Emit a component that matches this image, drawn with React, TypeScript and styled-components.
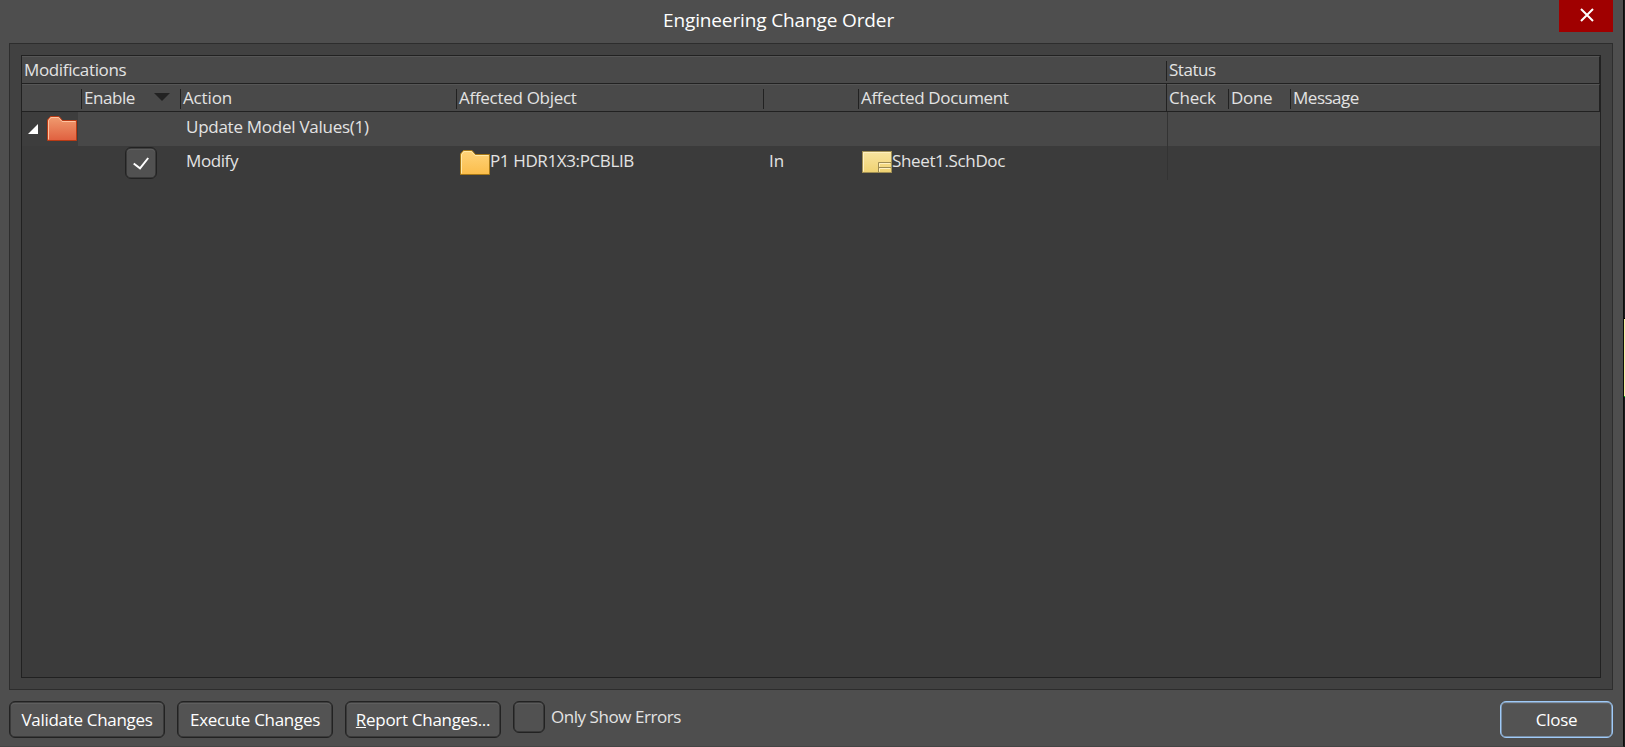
import React from 'react';
import styled, { createGlobalStyle } from 'styled-components';

const Global = createGlobalStyle`
  * { box-sizing: border-box; }
  html, body { margin: 0; overflow: hidden; background: #4e4e4e; }
`;

const Screen = styled.div`
  display: flex;
  width: 1625px;
  height: 747px;
  background: #1c1c1c;
`;

const Backdrop = styled.div`
  width: 1px;
  height: 79px;
  margin-top: 318px;
  background: #fbf3a0;
  border-top: 1px solid #000;
  border-bottom: 1px solid #00d000;
`;

const Window = styled.div`
  width: 1624px;
  height: 747px;
  display: flex;
  flex-direction: column;
  background: #4e4e4e;
  border-right: 1px solid #0c0c0c;
  border-bottom: 1px solid #444;
  font-family: 'Open Sans', 'Noto Sans', sans-serif;
  font-size: 17px;
  color: #e3e3e3;
  cursor: default;
`;

const TitleBar = styled.header`
  flex: none;
  height: 43px;
  display: flex;
  padding-right: 10px;
`;

const Title = styled.h1`
  flex: 1;
  margin: 0;
  padding-left: 663px;
  font-size: 19px;
  line-height: 40px;
  font-weight: 400;
  color: #fff;
  letter-spacing: -0.13px;
  white-space: nowrap;
`;

const WindowClose = styled.button`
  width: 54px;
  height: 32px;
  padding: 8px 0 0 1px;
  border: 0;
  background: #a00000;
  display: flex;
  justify-content: center;
`;

const Panel = styled.main`
  flex: none;
  width: 1604px;
  height: 647px;
  margin-left: 9px;
  padding: 11px;
  background: #414141;
  border: 1px solid #2d2d2d;
`;

const Grid = styled.div`
  width: 1580px;
  height: 623px;
  background: #3b3b3b;
  border: 1px solid #212121;
`;

const HeaderRow = styled.div`
  display: flex;
  align-items: flex-start;
  height: 28px;
  padding-top: 4px;
  background: #494949;
  border-top: 1px solid #565656;
  border-right: 1px solid #212121;
  border-bottom: 1px solid #212121;
`;

const HeaderCell = styled.div<{ $w?: number; $line?: boolean; $full?: boolean }>`
  flex: ${p => (p.$w ? 'none' : '1')};
  width: ${p => (p.$w ? p.$w + 'px' : 'auto')};
  height: ${p => (p.$full ? 27 : 20)}px;
  margin-top: ${p => (p.$full ? -5 : 0)}px;
  padding: ${p => (p.$full ? 5 : 0)}px 0 0 2px;
  border-left: ${p => (p.$line ? '1px solid #212121' : '0')};
  display: flex;
  justify-content: space-between;
  line-height: 18px;
  white-space: nowrap;
`;

const Row = styled.div<{ $h: number; $bg: string }>`
  display: flex;
  height: ${p => p.$h}px;
  background: ${p => p.$bg};
`;

const Cell = styled.div<{ $w?: number; $pad?: number; $top?: number; $bg?: string; $line?: string }>`
  flex: ${p => (p.$w ? 'none' : '1')};
  width: ${p => (p.$w ? p.$w + 'px' : 'auto')};
  padding: ${p => p.$top || 0}px 0 0 ${p => p.$pad || 0}px;
  background: ${p => p.$bg || 'transparent'};
  border-left: ${p => (p.$line ? `1px solid ${p.$line}` : '0')};
  display: flex;
  align-items: flex-start;
  line-height: 24px;
  white-space: nowrap;
`;

const Text = styled.span<{ $ls?: number }>`
  letter-spacing: ${p => p.$ls ?? -0.33}px;
`;

const IconBox = styled.span<{ $top?: number; $left?: number }>`
  display: flex;
  flex: none;
  margin: ${p => p.$top || 0}px 0 0 ${p => p.$left || 0}px;
`;

const Check = styled.span`
  flex: none;
  width: 32px;
  height: 32px;
  display: flex;
  align-items: center;
  justify-content: center;
  background: #515151;
  border: 1px solid #222;
  border-radius: 6px;
  box-shadow: inset 0 0 0 .5px #222, inset 0 2px 0 #5c5c5c;
`;

const Footer = styled.footer`
  display: flex;
  align-items: flex-start;
  padding: 11px 10px 0 9px;
`;

const Button = styled.button<{ $w?: number; $focus?: boolean }>`
  width: ${p => p.$w || 156}px;
  height: 37px;
  margin: 0 ${p => (p.$focus ? 0 : 12)}px 0 0;
  padding: 0;
  background: #535353;
  border: ${p => (p.$focus ? '1px solid #9fcaf8' : '1px solid #222')};
  border-radius: 6px;
  box-shadow: inset 0 0 0 ${p => (p.$focus ? '.5px #9fcaf8' : '.5px #222')}, inset 0 2px 0 #5e5e5e;
  font: inherit;
  color: #fff;
  letter-spacing: -0.3px;
  white-space: nowrap;
`;

const FooterLabel = styled.label`
  flex: 1;
  padding-left: 6px;
  line-height: 32px;
`;

const Folder = ({ id, top, bottom, stroke, hi }: { id: string; top: string; bottom: string; stroke: string; hi: string }) => (
  <svg width="30" height="25" viewBox="0 0 30 25">
    <defs>
      <linearGradient id={id} x1="0" y1="0" x2="0" y2="1">
        <stop offset="0" stopColor={top} />
        <stop offset="1" stopColor={bottom} />
      </linearGradient>
    </defs>
    <path d="M.5 24.5V4L3.500.5H12L15.500 4.500H29.500V24.500Z" fill={`url(#${id})`} stroke={stroke} />
    <path d="M1.500 23.500V4.500L4 1.500H11.500L15 5.500H28.500" fill="none" stroke={hi} />
  </svg>
);

const SheetIcon = () => (
  <svg width="30" height="22" viewBox="0 0 30 22">
    <defs>
      <linearGradient id="sheet" x1="0" y1="0" x2="0" y2="1">
        <stop offset="0" stopColor="#f8e4a0" />
        <stop offset="1" stopColor="#efd272" />
      </linearGradient>
    </defs>
    <rect x=".5" y=".5" width="29" height="21" fill="url(#sheet)" stroke="#a08f55" />
    <path d="M1.500 20.500V1.500H28.500" fill="none" stroke="#fff0c0" />
    <path d="M16.500 21V11.500H29M17 16.500H29" fill="none" stroke="#9c8b53" />
    <path d="M17.500 15.500V12.500H28M17.500 20.500V17.500H28" fill="none" stroke="#fff0c0" />
  </svg>
);

export default function App() {
  return (
    <Screen>
      <Global />
      <Window>
        <TitleBar>
          <Title>Engineering Change Order</Title>
          <WindowClose aria-label="Close window">
            <svg width="14" height="14" viewBox="0 0 14 14">
              <path d="M1 1L13 13M13 1L1 13" stroke="#fff" strokeWidth="2" />
            </svg>
          </WindowClose>
        </TitleBar>
        <Panel>
          <Grid>
            <HeaderRow>
              <HeaderCell $w={1144}><Text $ls={-0.36}>Modifications</Text></HeaderCell>
              <HeaderCell $line><Text $ls={-0.45}>Status</Text></HeaderCell>
            </HeaderRow>
            <HeaderRow>
              <HeaderCell $w={59} />
              <HeaderCell $w={99} $line>
                <Text $ls={-0.45}>Enable</Text>
                <IconBox $top={4}>
                  <svg width="26" height="8" viewBox="0 0 26 8"><path d="M0 0H16L8 8Z" fill="#222" /></svg>
                </IconBox>
              </HeaderCell>
              <HeaderCell $w={276} $line><Text $ls={-0.15}>Action</Text></HeaderCell>
              <HeaderCell $w={307} $line><Text $ls={-0.29}>Affected Object</Text></HeaderCell>
              <HeaderCell $w={95} $line />
              <HeaderCell $w={308} $line><Text>Affected Document</Text></HeaderCell>
              <HeaderCell $w={62} $line $full><Text $ls={-0.2}>Check</Text></HeaderCell>
              <HeaderCell $w={62} $line><Text $ls={-0.3}>Done</Text></HeaderCell>
              <HeaderCell $line><Text $ls={-0.48}>Message</Text></HeaderCell>
            </HeaderRow>
            <Row $h={34} $bg="#484848">
              <Cell $w={56} $bg="#3d3d3d" $pad={6} $top={4}>
                <IconBox $top={8}>
                  <svg width="10" height="10" viewBox="0 0 10 10"><path d="M10 0V10H0Z" fill="#fff" /></svg>
                </IconBox>
                <IconBox $left={9}>
                  <Folder id="red" top="#f09c70" bottom="#e0603f" stroke="#b83a14" hi="#ffc3a0" />
                </IconBox>
              </Cell>
              <Cell $w={108} />
              <Cell $w={981} $top={3}><Text $ls={-0.26}>Update Model Values(1)</Text></Cell>
              <Cell $line="#333" />
            </Row>
            <Row $h={34} $bg="#3b3b3b">
              <Cell $w={164} $pad={103} $top={1}>
                <Check>
                  <svg width="16" height="13" viewBox="0 0 16 13"><path d="M.7 6.500L7 11.300L15.200 1" fill="none" stroke="#fff" strokeWidth="2" /></svg>
                </Check>
              </Cell>
              <Cell $w={274} $top={3}><Text $ls={-0.4}>Modify</Text></Cell>
              <Cell $w={309} $top={3}>
                <IconBox $top={1}><Folder id="yellow" top="#ffd47a" bottom="#fbbd4b" stroke="#a87816" hi="#ffeaa8" /></IconBox>
                <Text $ls={-0.38}>P1 HDR1X3:PCBLIB</Text>
              </Cell>
              <Cell $w={93} $top={3}><Text $ls={0}>In</Text></Cell>
              <Cell $w={305} $top={3}>
                <IconBox $top={2}><SheetIcon /></IconBox>
                <Text $ls={-0.36}>Sheet1.SchDoc</Text>
              </Cell>
              <Cell $line="#333" />
            </Row>
          </Grid>
        </Panel>
        <Footer>
          <Button>Validate Changes</Button>
          <Button>Execute Changes</Button>
          <Button><u>R</u>eport Changes...</Button>
          <Check />
          <FooterLabel><Text $ls={-0.45}>Only Show Errors</Text></FooterLabel>
          <Button $w={113} $focus>Close</Button>
        </Footer>
      </Window>
      <Backdrop />
    </Screen>
  );
}
